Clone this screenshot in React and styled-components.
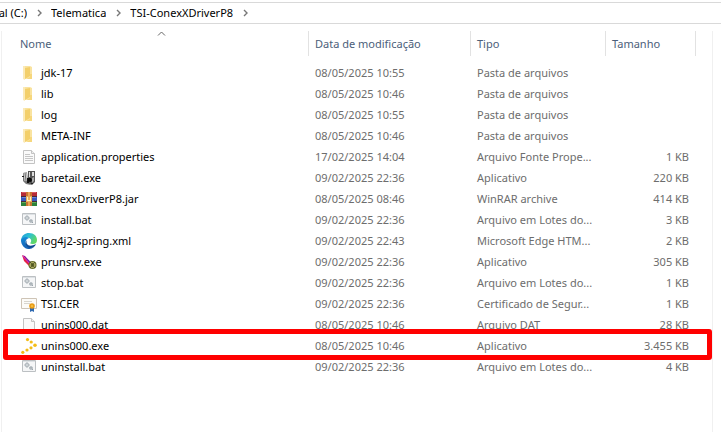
import React from "react";
import styled, { createGlobalStyle } from "styled-components";

const GlobalStyle = createGlobalStyle`
  *, *::before, *::after { box-sizing: border-box; }
  html, body, #root { height: 100%; }
  body {
    margin: 0;
    background: #fff;
    color: #000;
    font: 11px/16px "Noto Sans", "Open Sans", sans-serif;
  }
  button { font: inherit; color: inherit; background: none; border: 0; padding: 0; }
`;

const Explorer = styled.div`
  display: flex;
  flex-direction: column;
  min-height: 100%;
  padding-top: 2px;
`;

const AddressBar = styled.nav`
  display: flex;
  align-items: center;
  height: 22px;
  border-top: 1px solid #d9d9d9;
  border-bottom: 1px solid #d9d9d9;
`;

const Crumb = styled.button`
  display: flex;
  flex: none;
  justify-content: flex-end;
  overflow: hidden;
  width: ${({ $clipped }) => ($clipped ? "27px" : "auto")};
  white-space: nowrap;
`;

const CrumbArrow = styled.svg`
  flex: none;
  width: 5px;
  height: 8px;
  margin: 0 9px 0 10px;
  fill: none;
  stroke: #777;
  stroke-width: 1.4;
`;

const Panel = styled.main`
  flex: 1;
  margin: 7px 8px 0 1px;
  border: 1px solid #f0f0f0;
  border-width: 0 1px;
`;

const FileTable = styled.table`
  width: 100%;
  table-layout: fixed;
  border-collapse: collapse;
`;

const Column = styled.col`
  width: ${({ $width }) => $width || "auto"};
`;

const HeaderCell = styled.th`
  height: 31px;
  padding: 0;
  vertical-align: top;
  font-weight: 400;
`;

const SortButton = styled.button`
  position: relative;
  display: block;
  width: 100%;
  height: 25px;
  padding-left: ${({ $first }) => ($first ? "18px" : "6px")};
  border-right: 1px solid #e2e2e2;
  color: #4c607a;
  text-align: left;
`;

const SortMark = styled.svg`
  position: absolute;
  top: 0;
  right: 142px;
  width: 9px;
  height: 5px;
  fill: none;
  stroke: #666;
`;

const FileRow = styled.tr`
  position: relative;
  height: 21px;
`;

const Cell = styled.td`
  padding: 0 7px 0 6px;
  color: #6d6d6d;
  text-align: ${({ $align }) => $align || "left"};
  white-space: nowrap;
`;

const FileName = styled.div`
  display: flex;
  align-items: center;
  gap: 4px;
  padding-left: 13px;
  color: #000;
`;

const RowMarker = styled.span`
  position: absolute;
  inset: -6px 0 -4px 1px;
  border: 5px solid #f00;
  border-radius: 3px;
  pointer-events: none;
`;

const Icon = styled.svg`
  flex: none;
  width: 16px;
  height: 16px;
`;

const FolderIcon = () => (
  <Icon viewBox="0 0 16 16">
    <path d="M2 1h7l2 1v11l-9 1z" fill="#f9e3a0" />
    <path d="M2 1h2v14l-2-1z" fill="#fbeab8" />
    <path d="M4 3l5-1v9l-5 3z" fill="#f3cf6a" />
    <path d="M9 9h2v5H5l4-2z" fill="#f6d77d" />
  </Icon>
);

const PageIcon = ({ lines }) => (
  <Icon viewBox="0 0 16 16">
    <path d="M2.5 1.5h8l3 3v10h-11z" fill="#fafafa" stroke="#c3c3c3" />
    <path d="M10.5 1.5v3h3" fill="#eee" stroke="#c3c3c3" />
    {lines && <path d="M4 5.5h5M4 7.5h8M4 9.5h8M4 11.5h8" stroke="#c6c6c6" fill="none" />}
  </Icon>
);

const TailIcon = () => (
  <Icon viewBox="0 0 16 16">
    <path d="M2 3l4-1 1 9 3 4-5-1-3-3z" fill="#777" />
    <path d="M3 3l1 8M5 2l1 9" stroke="#ccc" fill="none" />
    <path d="M7 1h7v11l-3 3-4-2z" fill="#555" />
    <path d="M8 2h1v5H8zM11 2h2v4h-2z" fill="#ddd" />
    <path d="M6 8h4v2H8v3H6z" fill="#111" />
    <circle cx="9" cy="10" r="2" fill="#080808" />
    <path d="M11 8l2-1v4l-2 2z" fill="#aaa" />
    <path d="M1 6h2v1H1zM10 13h2v1h-2z" fill="#222" />
  </Icon>
);

const ArchiveIcon = () => (
  <Icon viewBox="0 0 16 16">
    <path d="M0 1h16v4H0z" fill="#b52b38" />
    <path d="M1 1h14v1H1z" fill="#d65a62" />
    <path d="M0 6h16v4H0z" fill="#3657bd" />
    <path d="M1 6h14v1H1z" fill="#6e84da" />
    <path d="M0 11h16v4H0z" fill="#2d823a" />
    <path d="M1 11h14v1H1z" fill="#63ad55" />
    <path d="M0 5h16v1H0zM0 10h16v1H0z" fill="#452b36" />
    <path d="M5 1h6v14H5z" fill="#c87531" />
    <path d="M5 5h6v6H5z" fill="#e9b05d" />
    <path d="M6 6h1v3h2V6h1v4H6z" fill="#fff0bd" />
    <path d="M7 1h2v5H7zM7 11h2v4H7z" fill="#eca557" />
  </Icon>
);

const BatchIcon = () => (
  <Icon viewBox="0 0 16 16">
    <path d="M1.500 1.500h13v11h-13z" fill="#f5f6f7" stroke="#bcc0c3" />
    <path d="M2 2h12v1H2z" fill="#dde1e4" />
    <circle cx="6" cy="6" r="1.500" fill="none" stroke="#b4bbc0" strokeWidth="1.500" />
    <path d="M6 3v6M3 6h6" stroke="#b4bbc0" strokeDasharray="1 4" />
    <circle cx="10" cy="9" r="1.200" fill="none" stroke="#9aa4ab" strokeWidth="1.200" />
    <path d="M11 10l1 1" stroke="#9aa4ab" />
  </Icon>
);

const EdgeIcon = () => (
  <Icon viewBox="0 0 16 16">
    <defs>
      <linearGradient id="edgeTop" x1="0" y1="0" x2="1" y2="0.500">
        <stop offset="0" stopColor="#2398dc" />
        <stop offset="0.500" stopColor="#2cc0d2" />
        <stop offset="1" stopColor="#61d862" />
      </linearGradient>
      <linearGradient id="edgeBody" x1="0" y1="0" x2="0" y2="1">
        <stop offset="0" stopColor="#168bd8" />
        <stop offset="1" stopColor="#165eb2" />
      </linearGradient>
    </defs>
    <path d="M0 7C1 2 4 0 8 0c5 0 8 3 8 7 0 3-2 4-4 4-3 0-3-1-2-2 1-3-2-5-5-4-3 0-5 2-5 5z" fill="url(#edgeTop)" />
    <path d="M0 7c1-3 6-4 8-2-3 1-4 3-3 6 1 2 4 4 8 3-6 5-13 0-13-7z" fill="url(#edgeBody)" />
    <path d="M6 7c-2 4 2 8 9 4-1 3-4 4-6 4-4-1-6-5-3-8z" fill="#124b93" />
  </Icon>
);

const FeatherIcon = () => (
  <Icon viewBox="0 0 16 16">
    <path d="M1 1l3 1 7 8-2 2z" fill="#a71283" />
    <path d="M1 1l2 6 5 5 1-2z" fill="#e42345" />
    <path d="M3 2l8 7-1 2z" fill="#6832a8" />
    <path d="M2 2l7 8" stroke="#d42bd0" />
    <circle cx="11.500" cy="11" r="4" fill="#69702c" />
    <circle cx="11.500" cy="11" r="2.500" fill="none" stroke="#c5c17c" />
    <path d="M9 8l5 6M14 8l-5 6" stroke="#444a20" strokeWidth="0.800" />
  </Icon>
);

const CertificateIcon = () => (
  <Icon viewBox="0 0 16 16">
    <path d="M0.500 2.500h15v10H0.500z" fill="#fcfbf8" stroke="#cec4b6" />
    <path d="M3 5.500h8M3 7.500h6" stroke="#d8d5cd" />
    <path d="M9 11h4v5l-2-1-2 1z" fill="#2e69b1" />
    <circle cx="11" cy="10" r="2.800" fill="#e99b16" />
    <circle cx="11" cy="10" r="1.200" fill="#f5bd3d" />
  </Icon>
);

const DotsIcon = () => (
  <Icon viewBox="0 0 16 16" fill="#f3bd18">
    <circle cx="6.500" cy="1.600" r="1.600" />
    <circle cx="10.200" cy="4" r="1.600" />
    <circle cx="14" cy="7.300" r="1.800" />
    <circle cx="10" cy="9.800" r="1.600" />
    <circle cx="6" cy="12" r="1.600" />
    <circle cx="1.800" cy="14.300" r="1.600" />
  </Icon>
);

const icons = {
  folder: <FolderIcon />,
  text: <PageIcon lines />,
  page: <PageIcon />,
  tail: <TailIcon />,
  archive: <ArchiveIcon />,
  batch: <BatchIcon />,
  edge: <EdgeIcon />,
  feather: <FeatherIcon />,
  certificate: <CertificateIcon />,
  dots: <DotsIcon />,
};

const files = [
  ["folder", "jdk-17", "08/05/2025 10:55", "Pasta de arquivos", ""],
  ["folder", "lib", "08/05/2025 10:46", "Pasta de arquivos", ""],
  ["folder", "log", "08/05/2025 10:55", "Pasta de arquivos", ""],
  ["folder", "META-INF", "08/05/2025 10:46", "Pasta de arquivos", ""],
  ["text", "application.properties", "17/02/2025 14:04", "Arquivo Fonte Prope...", "1 KB"],
  ["tail", "baretail.exe", "09/02/2025 22:36", "Aplicativo", "220 KB"],
  ["archive", "conexxDriverP8.jar", "08/05/2025 08:46", "WinRAR archive", "414 KB"],
  ["batch", "install.bat", "09/02/2025 22:36", "Arquivo em Lotes do...", "3 KB"],
  ["edge", "log4j2-spring.xml", "09/02/2025 22:43", "Microsoft Edge HTM...", "2 KB"],
  ["feather", "prunsrv.exe", "09/02/2025 22:36", "Aplicativo", "305 KB"],
  ["batch", "stop.bat", "09/02/2025 22:36", "Arquivo em Lotes do...", "1 KB"],
  ["certificate", "TSI.CER", "09/02/2025 22:36", "Certificado de Segur...", "1 KB"],
  ["page", "unins000.dat", "08/05/2025 10:46", "Arquivo DAT", "28 KB"],
  ["dots", "unins000.exe", "08/05/2025 10:46", "Aplicativo", "3.455 KB", true],
  ["batch", "uninstall.bat", "09/02/2025 22:36", "Arquivo em Lotes do...", "4 KB"],
];

const crumbs = ["al (C:)", "Telematica", "TSI-ConexXDriverP8"];

export default function App() {
  return (
    <Explorer>
      <GlobalStyle />
      <AddressBar>
        {crumbs.map((name, index) => (
          <React.Fragment key={name}>
            <Crumb $clipped={index === 0}>{name}</Crumb>
            <CrumbArrow viewBox="0 0 5 8">
              <path d="M1 1l3 3-3 3" />
            </CrumbArrow>
          </React.Fragment>
        ))}
      </AddressBar>
      <Panel>
        <FileTable>
          <colgroup>
            <Column />
            <Column $width="162px" />
            <Column $width="135px" />
            <Column $width="90px" />
            <Column $width="16px" />
          </colgroup>
          <thead>
            <tr>
              <HeaderCell scope="col" aria-sort="ascending">
                <SortButton $first>
                  Nome
                  <SortMark viewBox="0 0 9 5">
                    <path d="M1 4.500l3.500-3.500L8 4.500" />
                  </SortMark>
                </SortButton>
              </HeaderCell>
              {["Data de modificação", "Tipo", "Tamanho"].map((title) => (
                <HeaderCell scope="col" key={title}>
                  <SortButton>{title}</SortButton>
                </HeaderCell>
              ))}
              <td />
            </tr>
          </thead>
          <tbody>
            {files.map(([icon, name, date, type, size, marked]) => (
              <FileRow key={name}>
                <Cell>
                  <FileName>
                    {icons[icon]}
                    {name}
                  </FileName>
                  {marked && <RowMarker />}
                </Cell>
                <Cell>{date}</Cell>
                <Cell>{type}</Cell>
                <Cell $align="right">{size}</Cell>
                <td />
              </FileRow>
            ))}
          </tbody>
        </FileTable>
      </Panel>
    </Explorer>
  );
}
